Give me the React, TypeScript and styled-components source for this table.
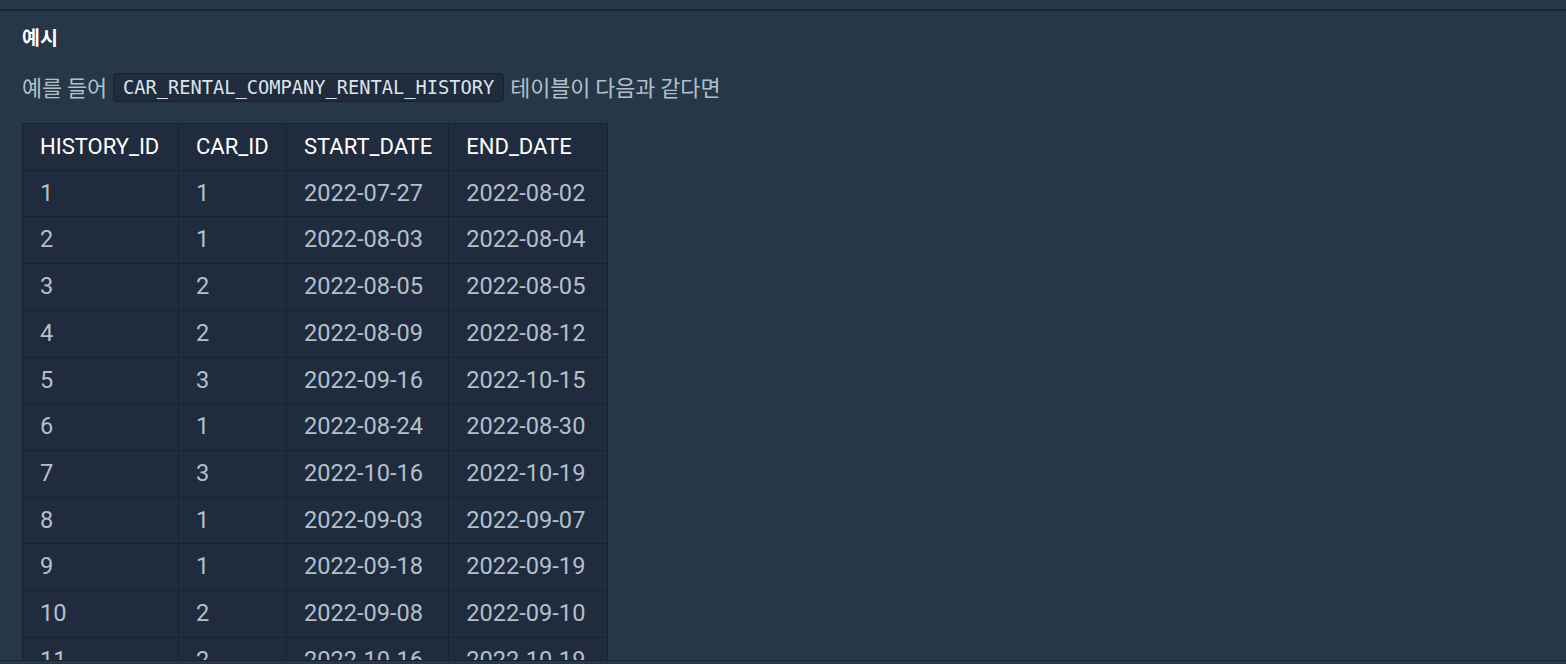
import React from "react";
import styled, { createGlobalStyle } from "styled-components";

const Global = createGlobalStyle`
  html, body { margin: 0; padding: 0; background: #263747; }
  body { overflow: hidden; }
`;

const Page = styled.div`
  width: 1566px;
  height: 664px;
  display: flex;
  flex-direction: column;
  background: #263747;
  font-family: "Noto Sans CJK KR", "Noto Sans", sans-serif;
`;

const TopStrip = styled.div`
  height: 9px;
  flex: none;
  border-bottom: 1px solid #172130;
  box-shadow: 0 1px 1px rgba(12, 21, 31, 0.5);
`;

const Content = styled.div`
  flex: none;
  height: 651px;
  overflow: hidden;
  padding: 13px 22px 0;
  box-sizing: border-box;
  border-bottom: 1px solid #172130;
`;

const Heading = styled.h5`
  margin: 0;
  font-size: 19.5px;
  line-height: 28px;
  font-weight: 700;
  color: #ffffff;
`;

const Para = styled.p`
  margin: 20px 0 20px;
  font-size: 21.8px;
  line-height: 32px;
  color: #b2c0cc;
`;

const Code = styled.code`
  display: inline-block;
  font-family: "DejaVu Sans Mono", "Liberation Mono", monospace;
  font-size: 18.7px;
  line-height: 27px;
  padding: 0 9px;
  margin: 0 1px;
  background: #202b3d;
  border: 1px solid #172130;
  border-radius: 4px;
  color: #dbe3ea;
  vertical-align: 2px;
`;

const Table = styled.table`
  border-collapse: collapse;
  background: #202b3d;
  border: 1px solid #172130;
  table-layout: fixed;
  font-family: Roboto, "Noto Sans", sans-serif;
`;

const Th = styled.th`
  text-align: left;
  font-weight: 400;
  font-size: 22px;
  line-height: 31.7px;
  padding: 7px 16px 7px 17px;
  color: #ffffff;
  border: 1px solid #172130;
  white-space: nowrap;
`;

const Td = styled.td`
  font-size: 23.6px;
  line-height: 31.7px;
  padding: 7px 16px 7px 17px;
  color: #b2c0cc;
  border: 1px solid #172130;
  white-space: nowrap;
`;

const rows: [string, string, string, string][] = [
  ["1", "1", "2022-07-27", "2022-08-02"],
  ["2", "1", "2022-08-03", "2022-08-04"],
  ["3", "2", "2022-08-05", "2022-08-05"],
  ["4", "2", "2022-08-09", "2022-08-12"],
  ["5", "3", "2022-09-16", "2022-10-15"],
  ["6", "1", "2022-08-24", "2022-08-30"],
  ["7", "3", "2022-10-16", "2022-10-19"],
  ["8", "1", "2022-09-03", "2022-09-07"],
  ["9", "1", "2022-09-18", "2022-09-19"],
  ["10", "2", "2022-09-08", "2022-09-10"],
  ["11", "2", "2022-10-16", "2022-10-19"],
];

export default function App() {
  return (
    <Page>
      <Global />
      <TopStrip />
      <Content>
        <Heading>예시</Heading>
        <Para>
          예를 들어 <Code>CAR_RENTAL_COMPANY_RENTAL_HISTORY</Code> 테이블이 다음과 같다면
        </Para>
        <Table>
          <colgroup>
            <col style={{ width: 156 }} />
            <col style={{ width: 108 }} />
            <col style={{ width: 160 }} />
            <col style={{ width: 159 }} />
          </colgroup>
          <thead>
            <tr>
              <Th>HISTORY_ID</Th>
              <Th>CAR_ID</Th>
              <Th>START_DATE</Th>
              <Th>END_DATE</Th>
            </tr>
          </thead>
          <tbody>
            {rows.map((r) => (
              <tr key={r[0]}>
                {r.map((c, i) => (
                  <Td key={i}>{c}</Td>
                ))}
              </tr>
            ))}
          </tbody>
        </Table>
      </Content>
    </Page>
  );
}
